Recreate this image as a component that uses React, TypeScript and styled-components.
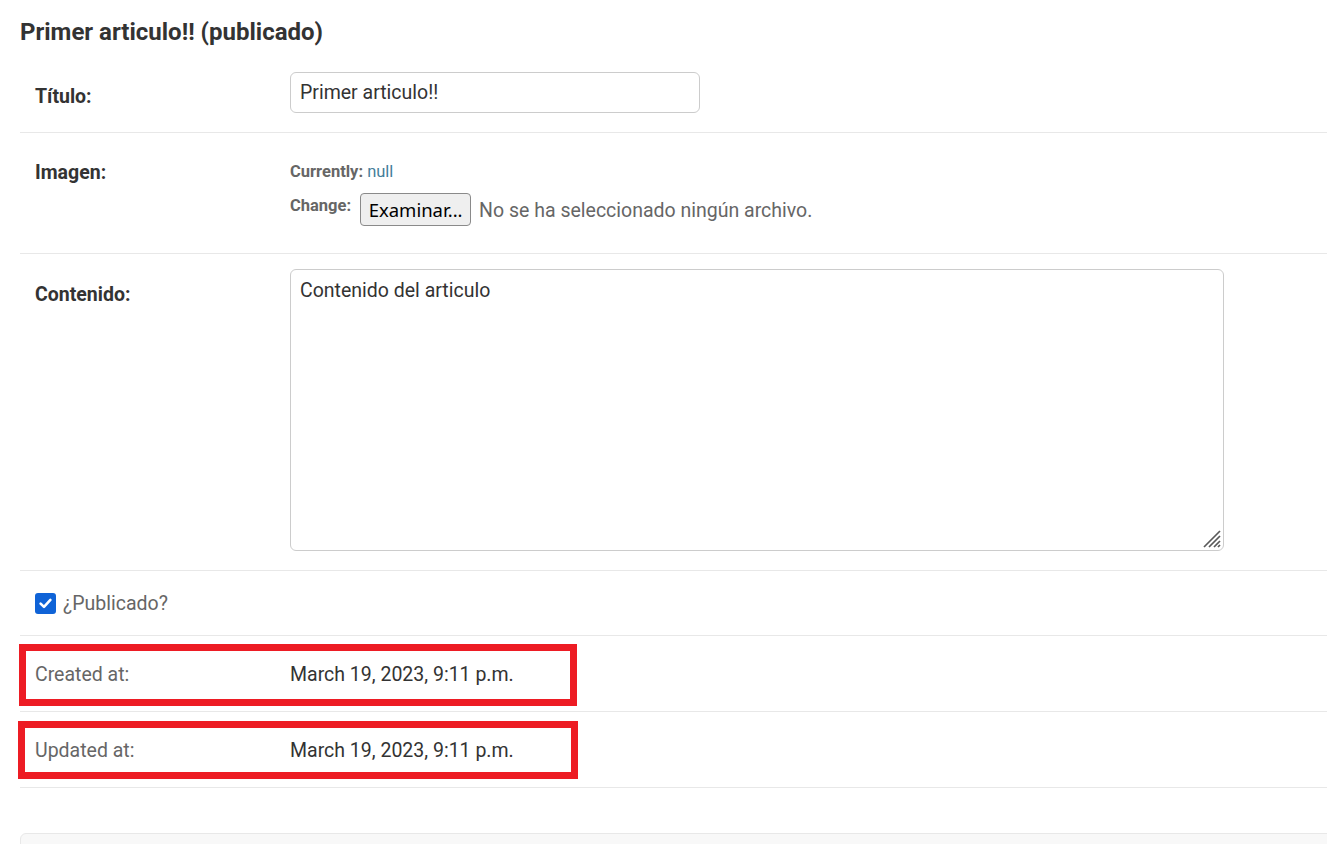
import React from "react";
import styled, { createGlobalStyle } from "styled-components";

const GlobalStyle = createGlobalStyle`
  html, body {
    margin: 0;
    padding: 0;
    overflow: hidden;
    background: #fff;
  }
  body {
    font-family: Roboto, "Noto Sans", sans-serif;
    color: #333;
  }
`;

const Page = styled.div`
  padding: 18px 0 0 20px;
  margin-right: -40px;
`;

const Heading = styled.h2`
  margin: 0 0 11px;
  font-size: 24px;
  line-height: 28px;
  font-weight: 700;
  color: #333;
`;

const Row = styled.div`
  position: relative;
  display: flex;
  align-items: flex-start;
  padding: 15px;
  border-bottom: 1px solid #e8e8e8;
`;

const Label = styled.div<{ $bold?: boolean; $top: number }>`
  flex: none;
  width: 240px;
  padding: ${(p) => p.$top}px 15px 0 0;
  font-size: 19.5px;
  line-height: 23px;
  font-weight: ${(p) => (p.$bold ? 700 : 400)};
  color: ${(p) => (p.$bold ? "#333" : "#666")};
`;

const TextInput = styled.input`
  display: block;
  box-sizing: border-box;
  width: 410px;
  height: 41px;
  margin: 0 0 4px;
  padding: 0 9px;
  border: 1px solid #ccc;
  border-radius: 6px;
  font-family: Roboto, sans-serif;
  font-size: 19.5px;
  color: #333;
  outline: none;
`;

const FileUpload = styled.div`
  padding: 9px 0 11px;
  font-size: 16.5px;
  color: #666;
`;

const FileLine = styled.div`
  height: 30px;
  line-height: 30px;
`;

const FileKey = styled.span`
  font-weight: 700;
`;

const FileLink = styled.a`
  color: #447e9b;
  text-decoration: none;
`;

const ChangeLine = styled.div`
  display: flex;
  align-items: flex-start;
  height: 34px;
  margin-top: 6px;
`;

const ChangeKey = styled.span`
  font-weight: 700;
  line-height: 26px;
`;

const FileButton = styled.button`
  box-sizing: border-box;
  height: 33px;
  width: 111px;
  margin-left: 9px;
  padding: 0;
  background: #efefef;
  border: 1px solid #8a8a8a;
  border-radius: 4px;
  font-family: "Noto Sans", "Open Sans", sans-serif;
  font-size: 18.5px;
  color: #000;
`;

const FileStatus = styled.span`
  margin-left: 8px;
  padding-top: 1px;
  font-size: 19.5px;
  line-height: 33px;
  color: #666;
`;

const AreaWrap = styled.div`
  position: relative;
  margin: 0 0 4px;
`;

const TextArea = styled.textarea`
  display: block;
  box-sizing: border-box;
  width: 934px;
  height: 282px;
  margin: 0;
  padding: 9px 9px;
  border: 1px solid #ccc;
  border-radius: 6px;
  font-family: Roboto, sans-serif;
  font-size: 19.5px;
  line-height: 23px;
  color: #333;
  outline: none;
  resize: none;
`;

const Grip = styled.svg`
  position: absolute;
  right: 3px;
  bottom: 3px;
  pointer-events: none;
`;

const CheckLine = styled.label`
  display: flex;
  align-items: center;
  gap: 7px;
  height: 34px;
  font-size: 19.5px;
  line-height: 23px;
  color: #666;
`;

const CheckBox = styled.span`
  display: flex;
  align-items: center;
  justify-content: center;
  box-sizing: border-box;
  width: 21px;
  height: 21px;
  border-radius: 3px;
  background: #0f63d7;
`;

const ReadonlyValue = styled.div`
  box-sizing: border-box;
  min-height: 45px;
  padding-top: 12px;
  font-size: 19.5px;
  line-height: 23px;
  color: #333;
`;

const Annotation = styled.div<{ $l: number; $t: number; $w: number; $h: number }>`
  position: absolute;
  left: ${(p) => p.$l}px;
  top: ${(p) => p.$t}px;
  width: ${(p) => p.$w}px;
  height: ${(p) => p.$h}px;
  box-sizing: border-box;
  border: 7px solid #ed1c24;
  pointer-events: none;
`;

const SubmitRow = styled.div`
  margin-top: 45px;
  height: 40px;
  background: #f8f8f8;
  border: 1px solid #e8e8e8;
  border-radius: 6px 0 0 0;
`;

export default function App() {
  return (
    <>
      <GlobalStyle />
      <Page>
        <Heading>Primer articulo!! (publicado)</Heading>

        <Row>
          <Label $bold $top={13}>Título:</Label>
          <TextInput defaultValue="Primer articulo!!" />
        </Row>

        <Row>
          <Label $bold $top={13}>Imagen:</Label>
          <FileUpload>
            <FileLine>
              <FileKey>Currently:</FileKey> <FileLink href="#">null</FileLink>
            </FileLine>
            <ChangeLine>
              <ChangeKey>Change:</ChangeKey>
              <FileButton type="button">Examinar...</FileButton>
              <FileStatus>No se ha seleccionado ningún archivo.</FileStatus>
            </ChangeLine>
          </FileUpload>
        </Row>

        <Row>
          <Label $bold $top={14}>Contenido:</Label>
          <AreaWrap>
            <TextArea defaultValue="Contenido del articulo" />
            <Grip width="20" height="20" viewBox="0 0 20 20">
              <g stroke="#5a5a5a" strokeWidth="1.7" fill="none">
                <line x1="19" y1="3" x2="3" y2="19" />
                <line x1="19" y1="8" x2="8" y2="19" />
                <line x1="19" y1="13" x2="13" y2="19" />
                <line x1="19" y1="17" x2="17" y2="19" />
              </g>
            </Grip>
          </AreaWrap>
        </Row>

        <Row>
          <CheckLine>
            <CheckBox>
              <svg width="15" height="15" viewBox="0 0 15 15">
                <path
                  d="M2.6 7.6 L6 10.9 L12.4 3.9"
                  fill="none"
                  stroke="#fff"
                  strokeWidth="2.6"
                  strokeLinecap="round"
                  strokeLinejoin="round"
                />
              </svg>
            </CheckBox>
            ¿Publicado?
          </CheckLine>
        </Row>

        <Row>
          <Label $top={12}>Created at:</Label>
          <ReadonlyValue>March 19, 2023, 9:11 p.m.</ReadonlyValue>
          <Annotation $l={-1} $t={8} $w={558} $h={62} />
        </Row>

        <Row>
          <Label $top={12}>Updated at:</Label>
          <ReadonlyValue>March 19, 2023, 9:11 p.m.</ReadonlyValue>
          <Annotation $l={-2} $t={9} $w={560} $h={58} />
        </Row>

        <SubmitRow />
      </Page>
    </>
  );
}
